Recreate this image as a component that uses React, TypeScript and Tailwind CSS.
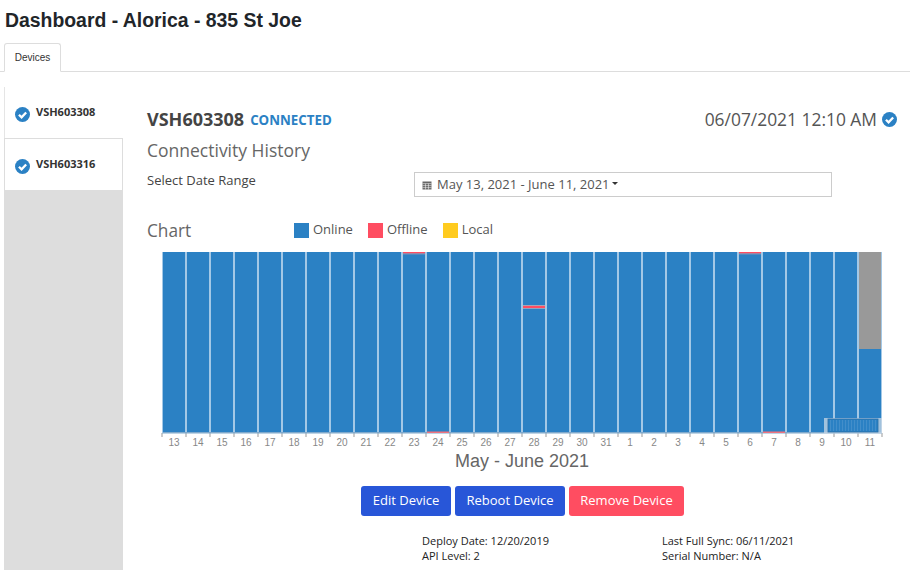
const labels = [13,14,15,16,17,18,19,20,21,22,23,24,25,26,27,28,29,30,31,1,2,3,4,5,6,7,8,9,10,11];

function Check({ size }: { size: number }) {
  return (
    <svg width={size} height={size} viewBox="0 0 16 16" className="shrink-0">
      <circle cx="8" cy="8" r="8" fill="#2b81c4" />
      <path d="M4.2 8.3 L7 11 L11.9 5.9" fill="none" stroke="#fff" strokeWidth="2.5" />
    </svg>
  );
}

function Chart() {
  const x0 = 12;
  const bw = 24;
  return (
    <svg width="760" height="200" viewBox="0 0 760 200" className="block">
      <rect x={x0} y="0" width={720} height="181" fill="#2b81c4" />
      <rect x={x0 + 696} y="0" width={24} height="97" fill="#999999" />
      {labels.map((l, i) => (
        <g key={i}>
          {i > 0 && <rect x={x0 + i * bw - 1} y="0" width="2" height="181" fill="#a3c8e6" />}
          <rect x={x0 + i * bw - 0.5} y="181" width="1" height="4" fill="#9a9a9a" />
          <text x={x0 + i * bw + 12} y="194" textAnchor="middle" fontSize="10" fill="#888888" fontFamily="'Liberation Sans', sans-serif">{l}</text>
        </g>
      ))}
      <rect x={x0 + 720 - 0.5} y="181" width="1" height="4" fill="#9a9a9a" />
      <rect x={x0} y="180" width="720" height="1.5" fill="#7fa9cc" />
      <rect x={x0} y="0" width="1" height="181" fill="#a3c8e6" />
      <rect x={x0 + 719} y="0" width="1" height="181" fill="#a3c8e6" />
      <rect x={x0 + 241} y="0" width="22" height="1.5" fill="#ff4d61" />
      <rect x={x0 + 241} y="1.5" width="22" height="0.8" fill="#a9a3b5" />
      <rect x={x0 + 577} y="0" width="22" height="1.5" fill="#ff4d61" />
      <rect x={x0 + 577} y="1.5" width="22" height="0.8" fill="#a9a3b5" />
      <rect x={x0 + 361} y="54" width="22" height="2" fill="#ff4d61" />
      <rect x={x0 + 361} y="53" width="22" height="1" fill="#a9a3b5" />
      <rect x={x0 + 361} y="56" width="22" height="1" fill="#8fa5c0" />
      <rect x={x0 + 265} y="179.5" width="22" height="1.5" fill="#f0737f" />
      <rect x={x0 + 601} y="179.5" width="22" height="1.5" fill="#f0737f" />
      <rect x={x0 + 662} y="166" width="58" height="15.5" fill="#c9d8e6" fillOpacity="0.75" />
      <rect x={x0 + 666} y="167" width="50" height="13" fill="#2b81c4" stroke="#2a6ea6" strokeWidth="0.8" />
      {Array.from({ length: 16 }).map((_, i) => (
        <rect key={i} x={x0 + 668 + i * 3} y="168" width="1" height="11" fill="#5a9bd0" fillOpacity="0.5" />
      ))}
    </svg>
  );
}

function Legend({ color, label }: { color: string; label: string }) {
  return (
    <div className="flex items-center gap-1">
      <span className="block w-[15px] h-[15px]" style={{ backgroundColor: color }} />
      <span>{label}</span>
    </div>
  );
}

export default function App() {
  return (
    <div className="w-[910px] h-[570px] overflow-hidden bg-white text-[#444] font-['Open_Sans','Noto_Sans',sans-serif] flex flex-col">
      <h1 className="font-['Liberation_Sans',sans-serif] font-bold text-[19.4px] leading-[20px] text-[#212529] pl-[5px] pt-[10px] h-[43px]">
        Dashboard - Alorica - 835 St Joe
      </h1>
      <div className="h-[29px] border-b border-[#dddddd] pl-[4px] flex">
        <div className="w-[57px] h-[29px] border border-[#dddddd] border-b-white rounded-t-[3px] bg-white flex items-center justify-center font-['Liberation_Sans',sans-serif] text-[10px] text-[#333]">
          Devices
        </div>
      </div>
      <div className="flex flex-1 pt-[15px] pl-[4px] min-h-0">
        <aside className="w-[119px] shrink-0 bg-[#dddddd] flex flex-col">
          <div className="h-[51px] bg-white border-l border-[#e5e5e5] flex items-start pl-[10px] pt-[18px] gap-[6px]">
            <span className="mt-[2px]"><Check size={15} /></span>
            <span className="text-[11px] leading-[14px] font-bold text-[#333]">VSH603308</span>
          </div>
          <div className="h-[52px] bg-white border-l border-r border-t border-[#dddddd] flex items-start pl-[10px] pt-[18px] gap-[6px]">
            <span className="mt-[2px]"><Check size={15} /></span>
            <span className="text-[11px] leading-[14px] font-bold text-[#333]">VSH603316</span>
          </div>
        </aside>
        <main className="flex-1 pl-[24px] pt-[19px] min-w-0">
          <div className="flex items-center justify-between pr-[13px] h-[26px]">
            <div className="flex items-baseline gap-[6px]">
              <span className="text-[18px] font-bold text-[#444]">VSH603308</span>
              <span className="text-[13.3px] font-bold text-[#2b81c4] -translate-y-px">CONNECTED</span>
            </div>
            <div className="flex items-center gap-[5px] text-[17.4px] font-normal text-[#555]">
              <span>06/07/2021 12:10 AM</span>
              <Check size={15} />
            </div>
          </div>
          <div className="text-[17.5px] leading-[24px] text-[#666] mt-[6px]">Connectivity History</div>
          <div className="flex mt-[4px] h-[26px]">
            <div className="w-[267px] text-[13px] leading-[20px] pt-[4px] text-[#444]">Select Date Range</div>
            <div className="w-[418px] h-[25px] mt-[6px] border border-[#cccccc] flex items-center pl-[7px] text-[13px] text-[#555] gap-[5px]">
              <svg width="10" height="10" viewBox="0 0 10 10"><path d="M0.5 1.5H9.5V9.5H0.5Z" fill="#666" /><path d="M0.5 3.6H9.5M0.5 5.6H9.5M0.5 7.6H9.5M3.5 3.6V9.5M6.5 3.6V9.5" stroke="#fff" strokeWidth="0.5" /></svg>
              <span>May 13, 2021 - June 11, 2021</span>
              <span className="w-0 h-0 border-x-[3px] border-x-transparent border-t-[3px] border-t-[#333] ml-[-3px] mb-[2px]" />
            </div>
          </div>
          <div className="flex items-center mt-[25px] h-[26px]">
            <div className="w-[147px] text-[17.25px] pt-[2px] text-[#666]">Chart</div>
            <div className="flex gap-[15px] text-[13px] text-[#555]">
              <Legend color="#2b81c4" label="Online" />
              <Legend color="#ff4d61" label="Offline" />
              <Legend color="#ffcb1f" label="Local" />
            </div>
          </div>
          <div className="ml-[3px] mt-[9px] h-[199px]">
            <Chart />
          </div>
          <div className="w-[750px] text-center font-['Liberation_Sans',sans-serif] text-[18px] leading-[20px] text-[#666]">
            May - June 2021
          </div>
          <div className="flex justify-center gap-[4px] mt-[15px] w-[751px]">
            <div className="h-[30px] w-[90px] rounded-[3px] bg-[#2856d8] text-white text-[13px] flex items-center justify-center">Edit Device</div>
            <div className="h-[30px] w-[110px] rounded-[3px] bg-[#2856d8] text-white text-[13px] flex items-center justify-center">Reboot Device</div>
            <div className="h-[30px] w-[115px] rounded-[3px] bg-[#ff4d61] text-white text-[13px] flex items-center justify-center">Remove Device</div>
          </div>
          <div className="flex mt-[17px] pl-[275px] text-[11px] leading-[15px] text-[#222]">
            <div className="w-[240px]"><div>Deploy Date: 12/20/2019</div><div>API Level: 2</div></div>
            <div><div>Last Full Sync: 06/11/2021</div><div>Serial Number: N/A</div></div>
          </div>
        </main>
      </div>
    </div>
  );
}
